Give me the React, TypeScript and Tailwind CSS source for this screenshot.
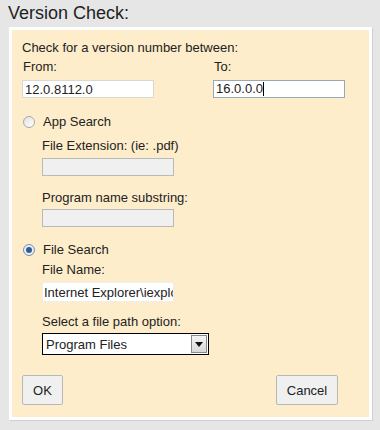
import React from "react";

export default function App() {
  return (
    <div className="w-[380px] h-[430px] bg-[#e6e6e6] text-[#222] overflow-hidden" style={{ fontFamily: '"Liberation Sans", Arial, sans-serif' }}>
      <div className="pl-2 pt-[2px] h-[27px] text-[18px] leading-[22px]">Version Check:</div>
      <div className="ml-[9px] w-[363px] h-[393px] border-[3px] border-white bg-[#feedcb] shadow-[1px_1px_0_#d0d0d0] pl-[10px] pr-[24px] pt-[10px] text-[13px] leading-[15px]">
        <div>Check for a version number between:</div>
        <div className="flex justify-between mt-[4px]">
          <div className="flex flex-col">
            <span className="pl-[1px]">From:</span>
            <input className="mt-[6px] w-[132px] h-[18px] bg-white border border-[#d8d8d8] px-[2px] text-[13px] outline-none" defaultValue="12.0.8112.0" />
          </div>
          <div className="flex flex-col">
            <span className="pl-[1px]">To:</span>
            <div className="mt-[6px] w-[132px] h-[18px] bg-white border border-[#9aa7b6] px-[2px] flex items-center leading-[16px]">
              <span>16.0.0.0</span>
              <span className="w-[1px] h-[14px] bg-black" />
            </div>
          </div>
        </div>
        <div className="flex items-center mt-[16px]">
          <span className="w-[12px] h-[12px] rounded-full border border-[#a9a9a9] bg-gradient-to-br from-[#e2e2e2] to-[#ffffff] ml-[1px]" />
          <span className="ml-[8px]">App Search</span>
        </div>
        <div className="pl-[20px]">
          <div className="mt-[9px]">File Extension: (ie: .pdf)</div>
          <div className="mt-[5px] w-[132px] h-[18px] bg-[#f0f0f0] border border-[#b9b9b9]" />
          <div className="mt-[14px]">Program name substring:</div>
          <div className="mt-[4px] w-[132px] h-[18px] bg-[#f0f0f0] border border-[#b9b9b9]" />
        </div>
        <div className="flex items-center mt-[15px]">
          <span className="w-[12px] h-[12px] rounded-full border border-[#7d8fa8] bg-[#e8eef5] ml-[1px] flex items-center justify-center">
            <span className="w-[6px] h-[6px] rounded-full bg-[#2e5d95]" />
          </span>
          <span className="ml-[8px]">File Search</span>
        </div>
        <div className="pl-[20px]">
          <div className="mt-[5px]">File Name:</div>
          <input className="block mt-[5px] w-[132px] h-[20px] bg-white border border-[#eeeeee] pl-[1px] text-[13px] outline-none" defaultValue="Internet Explorer\iexplore.exe" />
          <div className="mt-[12px]">Select a file path option:</div>
          <div className="mt-[4px] w-[167px] h-[22px] bg-white border border-black flex items-center justify-between">
            <span className="pl-[3px]">Program Files</span>
            <span className="w-[16px] h-[18px] mr-[1px] border border-[#888] bg-gradient-to-b from-[#f4f4f4] to-[#d8d8d8] flex items-center justify-center">
              <svg width="8" height="5" viewBox="0 0 8 5"><path d="M0 0h8L4 5z" fill="#111" /></svg>
            </span>
          </div>
        </div>
        <div className="flex justify-between mt-[20px] pr-[7px]">
          <button className="w-[41px] h-[30px] bg-[#f0f0f0] border border-[#b8b8b8] rounded-[2px] text-[13px]">OK</button>
          <button className="w-[62px] h-[30px] bg-[#f0f0f0] border border-[#b8b8b8] rounded-[2px] text-[13px]">Cancel</button>
        </div>
      </div>
    </div>
  );
}
